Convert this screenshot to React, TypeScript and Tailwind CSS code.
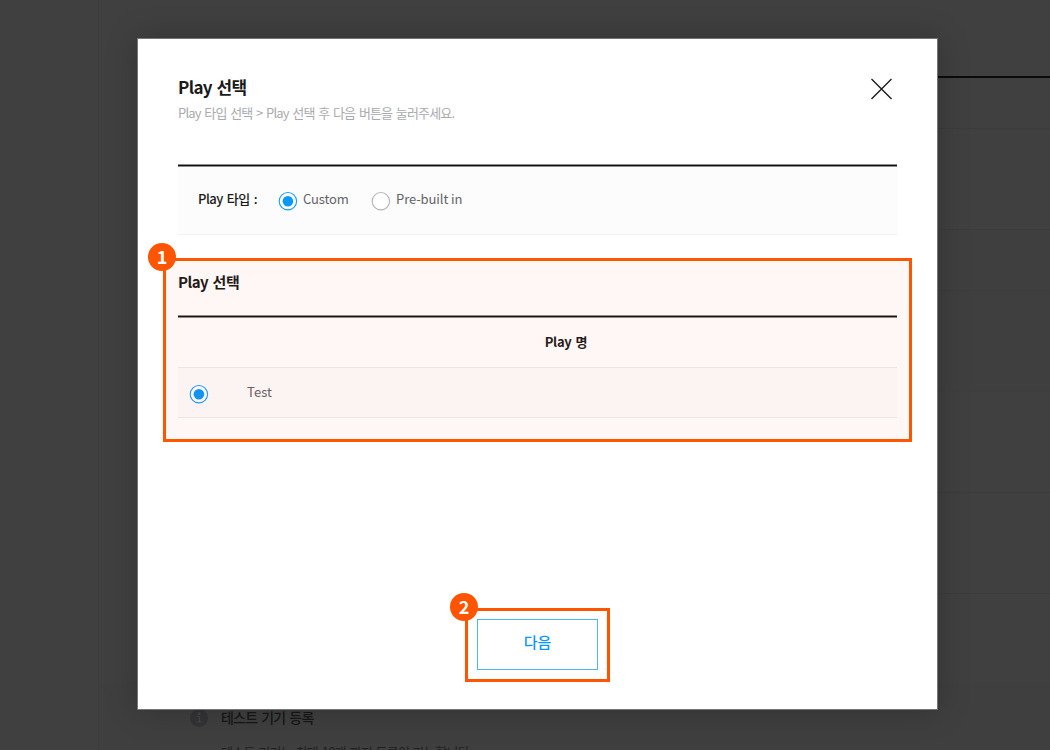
import React from 'react';

function Radio({ checked }: { checked?: boolean }) {
  return (
    <svg className="block h-5 w-5 shrink-0" viewBox="0 0 20 20" fill="none">
      <circle cx="9.9" cy="10.2" r="8.7" fill="#fff" stroke={checked ? '#1c9dfb' : '#b4b5ba'} strokeWidth="1.1" />
      {checked && <circle cx="9.9" cy="10.2" r="5.3" fill="#0a98fb" />}
    </svg>
  );
}

function Rule() {
  return (
    <div className="flex h-[3px] flex-col">
      <div className="h-px bg-[#8d8d8d]" />
      <div className="h-px bg-[#111]" />
      <div className="h-px bg-[#8d8d8d]" />
    </div>
  );
}

function Badge({ children }: { children: React.ReactNode }) {
  return (
    <div className="absolute -left-[18px] -top-[18px] flex h-7 w-7 items-center justify-center rounded-full bg-[#ff5500] pb-[3px] text-[18px] leading-none font-bold text-white">
      {children}
    </div>
  );
}

function Backdrop() {
  return (
    <div className="flex h-[750px] bg-[#404040]">
      <div className="w-[99px] border-r border-[#3c3c3c] bg-[#404040]" />
      <div className="flex flex-1 flex-col">
        <div className="ml-[90px] flex h-[682px] shrink-0 flex-col">
          <div className="h-[76px] shrink-0" />
          <div className="h-[2px] shrink-0 bg-[#0b0b0b]" />
          <div className="h-[51px] shrink-0 border-b border-[#3c3c3c]" />
          <div className="h-[101px] shrink-0 border-b border-[#3c3c3c]" />
          <div className="h-[61px] shrink-0 border-b border-[#3c3c3c] bg-[#3f3f3f]" />
          <div className="h-[101px] shrink-0 border-b border-[#3e3e3e] bg-[#3f3f3f]" />
          <div className="h-[101px] shrink-0 border-b border-[#3c3c3c]" />
          <div className="h-[101px] shrink-0 border-b border-[#3c3c3c]" />
        </div>
        <div className="flex flex-1 bg-[#3f3f3f] pl-[91px] pt-[27px]">
          <svg className="mr-[13px] h-[18px] w-[18px] shrink-0" viewBox="0 0 18 18">
            <circle cx="9" cy="9" r="9" fill="#333336" />
            <path d="M7 7.5h2.5V13M6.5 13h5.5M8.3 4h1.5v1.5H8.3z" stroke="#444" strokeWidth="1.2" fill="none" />
          </svg>
          <div className="-mt-px whitespace-nowrap">
            <div className="h-9 text-[14px] leading-[18px] font-medium tracking-[-0.8px] [word-spacing:1.6px] text-[#171717]">테스트 기기 등록</div>
            <div className="text-[13px] leading-[16px] tracking-[-0.75px] [word-spacing:1.5px] text-[#202020]">테스트 기기는 최대 10개 까지 등록이 가능합니다.</div>
          </div>
        </div>
      </div>
    </div>
  );
}

export default function App() {
  return (
    <div className="relative h-[750px] w-[1050px] overflow-hidden font-['Noto_Sans_CJK_KR',sans-serif]">
      <Backdrop />
      <div className="absolute left-[137px] top-[38px] flex h-[672px] w-[801px] flex-col border border-[#757575] bg-white px-10 whitespace-nowrap shadow-[0_0_30px_rgba(0,0,0,0.22)]">
        <header className="flex h-[125px] justify-between pt-[35px]">
          <div>
            <h1 className="text-[17px] leading-[26px] font-bold tracking-[-0.65px] [word-spacing:1.5px] text-[#1a1a1a]">Play 선택</h1>
            <p className="text-[13px] leading-[26px] tracking-[-0.85px] [word-spacing:1.6px] text-[#a9aaaf]">Play 타입 선택 &gt; Play 선택 후 다음 버튼을 눌러주세요.</p>
          </div>
          <svg className="mr-[5px] mt-1 h-[22px] w-[22px]" viewBox="0 0 22 22" stroke="#1b1b1b" strokeWidth="1.4">
            <path d="M1.5 1 21.5 21M21.5 1 1.5 21" />
          </svg>
        </header>
        <Rule />
        <div className="flex h-[68px] border-b border-[#f1f1f4] bg-[#fcfcfc] pl-5 text-[13px]">
          <span className="mt-[22px] w-20 leading-5 font-medium tracking-[-0.5px] [word-spacing:1.6px] text-[#1a1a1a]">Play 타입 :</span>
          <span className="mt-6"><Radio checked /></span>
          <span className="ml-[5px] mt-[22px] w-[68px] leading-5 tracking-[-0.15px] text-[#626367]">Custom</span>
          <span className="mt-6"><Radio /></span>
          <span className="ml-[5px] mt-[22px] leading-5 tracking-[-0.1px] text-[#626367]">Pre-built in</span>
        </div>
        <h2 className="h-20 pt-[35px] text-[15px] leading-6 font-bold tracking-[-0.5px] [word-spacing:1.5px] text-[#1a1a1a]">Play 선택</h2>
        <Rule />
        <div className="flex h-[50px] border-b border-[#ececf0] pl-[57px]">
          <div className="flex-1 pt-[14px] text-center text-[13px] leading-5 font-bold tracking-[-0.3px] [word-spacing:1.5px] text-[#1a1a1a]">Play 명</div>
        </div>
        <div className="flex h-[50px] border-b border-[#ececf0] bg-[#fcfcfc] pl-[11px]">
          <span className="mt-4"><Radio checked /></span>
          <span className="ml-[38px] mt-[14px] text-[13px] leading-5 tracking-[0.1px] text-[#626367]">Test</span>
        </div>
        <button className="mt-[201px] h-[51px] w-[121px] self-center border-[1.5px] border-[#4db5fc] pb-[5px] text-[15px] leading-6 font-medium tracking-[-0.1px] text-[#0a98fb]">다음</button>
      </div>
      <div className="absolute left-[163px] top-[258px] h-[184px] w-[749px] border-[3px] border-[#ff5500] bg-[rgba(255,65,15,0.045)]">
        <Badge>1</Badge>
      </div>
      <div className="absolute left-[465px] top-[608px] h-[74px] w-[145px] border-[3px] border-[#ff5500]">
        <Badge>2</Badge>
      </div>
    </div>
  );
}
